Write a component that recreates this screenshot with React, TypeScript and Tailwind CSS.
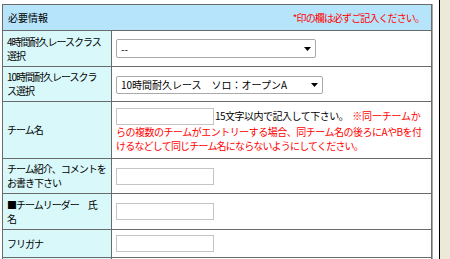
import React from "react";

const font = "font-['Noto_Sans_CJK_JP','Liberation_Sans',sans-serif]";
const labelCls =
  "w-[109px] shrink-0 bg-[#d8f8fa] border-r border-[#6b6b6b] pl-[4px] flex flex-col justify-center leading-[14px] tracking-[-1px] whitespace-nowrap";

function Arrow() {
  return (
    <svg className="absolute right-[5px] top-1/2 -translate-y-1/2" width="7" height="4" viewBox="0 0 7 4">
      <path d="M0 0H7L3.5 4Z" fill="#000" />
    </svg>
  );
}

function TextInput() {
  return <input type="text" className="w-[98px] h-[17px] border border-[#c4c4c4] bg-white outline-none" />;
}

export default function App() {
  return (
    <div className={`flex w-[450px] h-[259px] overflow-hidden bg-white text-[10px] text-black ${font}`}>
      <div className="w-[439px] shrink-0 pl-[2px] pt-[4px]">
        <div className="w-[430px] border-l border-t border-r border-[#6b6b6b] shadow-[1px_0_0_#a8a8a8]">
          {/* header */}
          <div className="h-[26px] bg-[#b5e4fb] border-b border-[#6b6b6b] flex items-center justify-between pl-[5px] pr-[7px] whitespace-nowrap">
            <span>必要情報</span>
            <span className="text-[#ff0000] tracking-[-0.9px]">*印の欄は必ずご記入ください。</span>
          </div>
          {/* row1 */}
          <div className="h-[36px] flex border-b border-[#6b6b6b]">
            <div className={labelCls}>
              <div>4時間耐久レースクラス</div>
              <div>選択</div>
            </div>
            <div className="flex-1 flex items-center pl-[4px]">
              <div className="relative w-[200px] h-[19px]">
                <select className="appearance-none w-full h-full border border-[#a9a9a9] rounded-[2px] bg-white pl-[4px] text-[10px] leading-[17px] outline-none">
                  <option>--</option>
                </select>
                <Arrow />
              </div>
            </div>
          </div>
          {/* row2 */}
          <div className="h-[35px] flex border-b border-[#6b6b6b]">
            <div className={labelCls}>
              <div>10時間耐久レースクラ</div>
              <div>ス選択</div>
            </div>
            <div className="flex-1 flex items-center pl-[4px] pt-[2px]">
              <div className="relative w-[207px] h-[18px]">
                <select className="appearance-none w-full h-full border border-[#a9a9a9] rounded-[2px] bg-white pl-[4px] text-[10px] leading-[16px] outline-none">
                  <option>10時間耐久レース　ソロ：オープンA</option>
                </select>
                <Arrow />
              </div>
            </div>
          </div>
          {/* row3 */}
          <div className="h-[57px] flex border-b border-[#6b6b6b]">
            <div className={labelCls}>
              <div>チーム名</div>
            </div>
            <div className="flex-1 flex flex-col justify-center pl-[4px] leading-[14px] whitespace-nowrap">
              <div className="flex items-center h-[18px]">
                <TextInput />
                <span className="ml-[1px] tracking-[-0.5px]">15文字以内で記入して下さい。</span>
                <span className="ml-[4px] text-[#ff0000] tracking-[-0.2px]">※同一チームか</span>
              </div>
              <div className="text-[#ff0000] tracking-[-0.5px]">らの複数のチームがエントリーする場合、同チーム名の後ろにAやBを付</div>
              <div className="text-[#ff0000] tracking-[-0.8px]">けるなどして同じチーム名にならないようにしてください。</div>
            </div>
          </div>
          {/* row4 */}
          <div className="h-[35px] flex border-b border-[#6b6b6b]">
            <div className={labelCls}>
              <div>チーム紹介、コメントを</div>
              <div>お書き下さい</div>
            </div>
            <div className="flex-1 flex items-center pl-[4px]">
              <TextInput />
            </div>
          </div>
          {/* row5 */}
          <div className="h-[36px] flex border-b border-[#6b6b6b]">
            <div className={labelCls}>
              <div>■チームリーダー　氏</div>
              <div>名</div>
            </div>
            <div className="flex-1 flex items-center pl-[4px]">
              <TextInput />
            </div>
          </div>
          {/* row6 */}
          <div className="h-[28px] flex border-b border-[#6b6b6b]">
            <div className={labelCls}>
              <div>フリガナ</div>
            </div>
            <div className="flex-1 flex items-center pl-[4px]">
              <TextInput />
            </div>
          </div>
          {/* row7 (partially visible) */}
          <div className="h-[30px] flex">
            <div className={labelCls}></div>
            <div className="flex-1"></div>
          </div>
        </div>
      </div>
      <div className="w-px shrink-0 bg-black" />
      <div className="flex-1 bg-[#ece9d8]" />
    </div>
  );
}
